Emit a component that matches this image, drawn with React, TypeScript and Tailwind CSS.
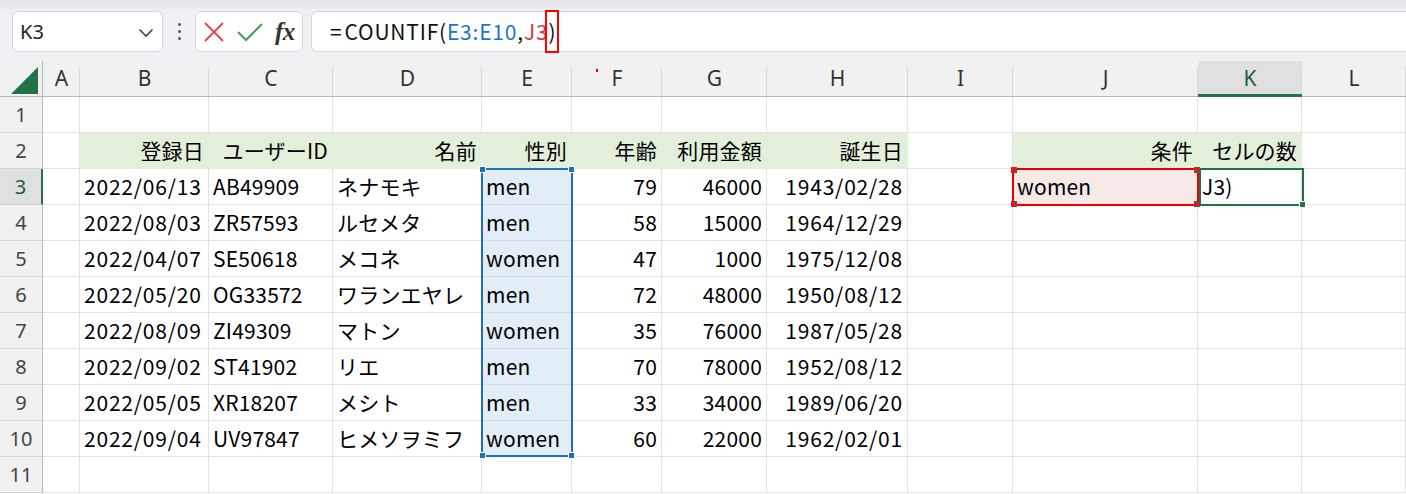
import React from "react";

const COLS = ["A", "B", "C", "D", "E", "F", "G", "H", "I", "J", "K", "L"];

type Cell = { t?: string; a?: "l" | "r"; bg?: string; wide?: boolean };

const G = "green";

const data: Record<number, Record<string, Cell>> = {
  2: {
    B: { t: "登録日", a: "r", bg: G },
    C: { t: "ユーザーID", a: "r", bg: G },
    D: { t: "名前", a: "r", bg: G },
    E: { t: "性別", a: "r", bg: G },
    F: { t: "年齢", a: "r", bg: G },
    G: { t: "利用金額", a: "r", bg: G },
    H: { t: "誕生日", a: "r", bg: G },
    J: { t: "条件", a: "r", bg: G },
    K: { t: "セルの数", a: "r", bg: G },
  },
};

const rows = [
  ["2022/06/13", "AB49909", "ネナモキ", "men", "79", "46000", "1943/02/28"],
  ["2022/08/03", "ZR57593", "ルセメタ", "men", "58", "15000", "1964/12/29"],
  ["2022/04/07", "SE50618", "メコネ", "women", "47", "1000", "1975/12/08"],
  ["2022/05/20", "OG33572", "ワランエヤレ", "men", "72", "48000", "1950/08/12"],
  ["2022/08/09", "ZI49309", "マトン", "women", "35", "76000", "1987/05/28"],
  ["2022/09/02", "ST41902", "リエ", "men", "70", "78000", "1952/08/12"],
  ["2022/05/05", "XR18207", "メシト", "men", "33", "34000", "1989/06/20"],
  ["2022/09/04", "UV97847", "ヒメソヲミフ", "women", "60", "22000", "1962/02/01"],
];

rows.forEach((r, i) => {
  const n = i + 3;
  data[n] = {
    B: { t: r[0], a: "l", wide: true },
    C: { t: r[1], a: "l" },
    D: { t: r[2], a: "l" },
    E: { t: r[3], a: "l", bg: "blue" },
    F: { t: r[4], a: "r" },
    G: { t: r[5], a: "r" },
    H: { t: r[6], a: "r", wide: true },
  };
});
data[3].J = { t: "women", a: "l", bg: "pink" };
data[3].K = { t: "J3)", a: "l" };

const gridCols =
  "grid grid-cols-[43px_37px_129px_124px_149px_90px_90px_105px_141px_105px_185px_104px_104px]";

function DataCell({ c }: { c?: Cell }) {
  let cls = "h-[36px] flex items-center overflow-visible whitespace-nowrap border-b border-r ";
  if (c?.bg === "green") cls += "bg-[#e2efda] border-[#e2efda] ";
  else if (c?.bg === "blue") cls += "bg-[#e3edf8] border-[#d3dbe4] ";
  else if (c?.bg === "pink") cls += "bg-[#f8e9e9] border-[#e2e2e2] ";
  else cls += "bg-white border-[#e2e2e2] ";
  cls += c?.a === "r" ? "justify-end pr-[4px] " : "justify-start pl-[4px] ";
  return (
    <div className={cls}>
      {c?.t && (
        <span
          className={
            "text-[21px] leading-none text-black " +
            (c.wide ? "tracking-[0.8px]" : "tracking-[0.2px]")
          }
        >
          {c.t}
        </span>
      )}
    </div>
  );
}

export default function App() {
  return (
    <div className="w-[1406px] h-[494px] overflow-hidden bg-white font-['Noto_Sans_CJK_JP','Noto_Sans',sans-serif] relative">
      {/* Formula bar */}
      <div className="h-[61px] bg-[#eff1f4] relative">
        <div className="absolute left-0 right-0 top-0 h-[10px] bg-gradient-to-b from-[#e1e3e6] to-[#eceef1]" />
        <div className="relative flex items-start pt-[11px] pl-[12px]">
          {/* Name box */}
          <div className="w-[151px] h-[41px] bg-white border border-[#d3d5d8] rounded-[6px] flex items-center justify-between pl-[7px] pr-[8px]">
            <span className="text-[20px] text-[#222] font-['Noto_Sans',sans-serif]">K3</span>
            <svg width="16" height="10" viewBox="0 0 16 10" className="mt-[2px]">
              <path d="M1.5 1.5 L8 8 L14.5 1.5" fill="none" stroke="#444" strokeWidth="1.6" />
            </svg>
          </div>
          {/* dots */}
          <div className="w-[32px] h-[41px] flex flex-col items-center justify-center gap-[4px]">
            <span className="w-[3px] h-[3px] rounded-full bg-[#555]" />
            <span className="w-[3px] h-[3px] rounded-full bg-[#555]" />
            <span className="w-[3px] h-[3px] rounded-full bg-[#555]" />
          </div>
          {/* buttons */}
          <div className="w-[108px] h-[41px] bg-white border border-[#d3d5d8] rounded-[6px] flex items-center pl-[7px]">
            <svg width="22" height="22" viewBox="0 0 22 22">
              <path d="M2 2 L20 20 M20 2 L2 20" stroke="#e8484b" strokeWidth="2" fill="none" />
            </svg>
            <svg width="28" height="22" viewBox="0 0 28 22" className="ml-[11px]">
              <path d="M2 11 L10 19 L26 3" stroke="#3fa34d" strokeWidth="2" fill="none" />
            </svg>
            <span className="ml-[11px] text-[25px] italic font-bold text-[#333] font-['Liberation_Serif',serif] leading-none tracking-[-0.5px]">fx</span>
          </div>
          {/* formula input */}
          <div className="ml-[8px] flex-1 h-[41px] bg-white border border-r-0 border-[#d3d5d8] rounded-l-[6px] flex items-center pl-[18px] relative">
            <span className="text-[21px] leading-none text-[#111] whitespace-nowrap tracking-[0.8px]">
              <span className="mr-[2px]">=</span>COUNTIF(
              <span className="text-[#1f73c8]">E3:E10</span>,
              <span className="text-[#d6373c]">J3</span>
              <span className="relative inline-block">
                )
                <span className="absolute left-[-3px] right-[-3px] top-[-11px] bottom-[-11px] border-2 border-[#ff0000]" />
              </span>
            </span>
          </div>
        </div>
      </div>

      {/* Sheet */}
      <div className="relative">
        {/* column header row */}
        <div className={gridCols + " h-[36px] bg-[#f1f1f1] border-b border-[#b8b8b8]"}>
          <div className="relative border-r border-[#b8b8b8] h-[35px]">
            <svg width="28" height="28" viewBox="0 0 28 28" className="absolute left-[11px] top-[6px]">
              <path d="M27 0 L27 27 L0 27 Z" fill="#217346" />
            </svg>
          </div>
          {COLS.map((c) => (
            <div
              key={c}
              className={
                "relative flex items-center justify-center h-[35px] " +
                (c === "K" ? "bg-[#e0e0e0]" : "")
              }
            >
              <span
                className={
                  "text-[21px] leading-none font-['Noto_Sans',sans-serif] " +
                  (c === "K" ? "text-[#1c5e3a]" : "text-[#333]")
                }
              >
                {c}
              </span>
              <span className="absolute right-0 top-[6px] bottom-0 w-px bg-[#d9d9d9]" />
              {c === "K" && <span className="absolute left-0 right-0 bottom-[-1px] h-[3px] bg-[#217346]" />}
            </div>
          ))}
        </div>
        {/* data rows */}
        {Array.from({ length: 11 }, (_, i) => i + 1).map((r) => (
          <div key={r} className={gridCols}>
            <div
              className={
                "relative h-[36px] flex items-center justify-center border-b border-r " +
                (r === 3
                  ? "bg-[#e0e0e0] border-b-[#d0d0d0] border-r-[#217346] border-r-2"
                  : "bg-[#f1f1f1] border-[#d4d4d4] border-r-[#b8b8b8]")
              }
            >
              <span
                className={
                  "text-[20px] leading-none font-['Noto_Sans',sans-serif] " +
                  (r === 3 ? "text-[#1c5e3a]" : "text-[#444]")
                }
              >
                {r}
              </span>
            </div>
            {COLS.map((c) => (
              <DataCell key={c} c={data[r]?.[c]} />
            ))}
          </div>
        ))}

        {/* E3:E10 range highlight */}
        <div className="absolute left-[481px] top-[107px] w-[92px] h-[289px] border-2 border-[#1e6fc0] pointer-events-none">
          <span className="absolute -left-[4px] -top-[4px] w-[7px] h-[7px] bg-[#1e6fc0] border border-white" />
          <span className="absolute -right-[4px] -top-[4px] w-[7px] h-[7px] bg-[#1e6fc0] border border-white" />
          <span className="absolute -left-[4px] -bottom-[4px] w-[7px] h-[7px] bg-[#1e6fc0] border border-white" />
          <span className="absolute -right-[4px] -bottom-[4px] w-[7px] h-[7px] bg-[#1e6fc0] border border-white" />
        </div>
        {/* J3 red highlight */}
        <div className="absolute left-[1012px] top-[107px] w-[187px] h-[38px] border-2 border-[#e60000] pointer-events-none">
          <span className="absolute -left-[3px] -top-[3px] w-[6px] h-[6px] bg-[#c9232d]" />
          <span className="absolute -right-[3px] -top-[3px] w-[6px] h-[6px] bg-[#c9232d]" />
          <span className="absolute -left-[3px] -bottom-[3px] w-[6px] h-[6px] bg-[#c9232d]" />
          <span className="absolute -right-[3px] -bottom-[3px] w-[6px] h-[6px] bg-[#c9232d]" />
        </div>
        {/* K3 active cell */}
        <div className="absolute left-[1199px] top-[107px] w-[105px] h-[38px] border-2 border-[#217346] pointer-events-none">
          <span className="absolute -right-[4px] -bottom-[4px] w-[7px] h-[7px] bg-[#217346] border border-white" />
        </div>
        {/* tiny red mark */}
        <span className="absolute left-[596px] top-[8px] w-[2px] h-[3px] bg-[#ff0000]" />
      </div>
    </div>
  );
}
